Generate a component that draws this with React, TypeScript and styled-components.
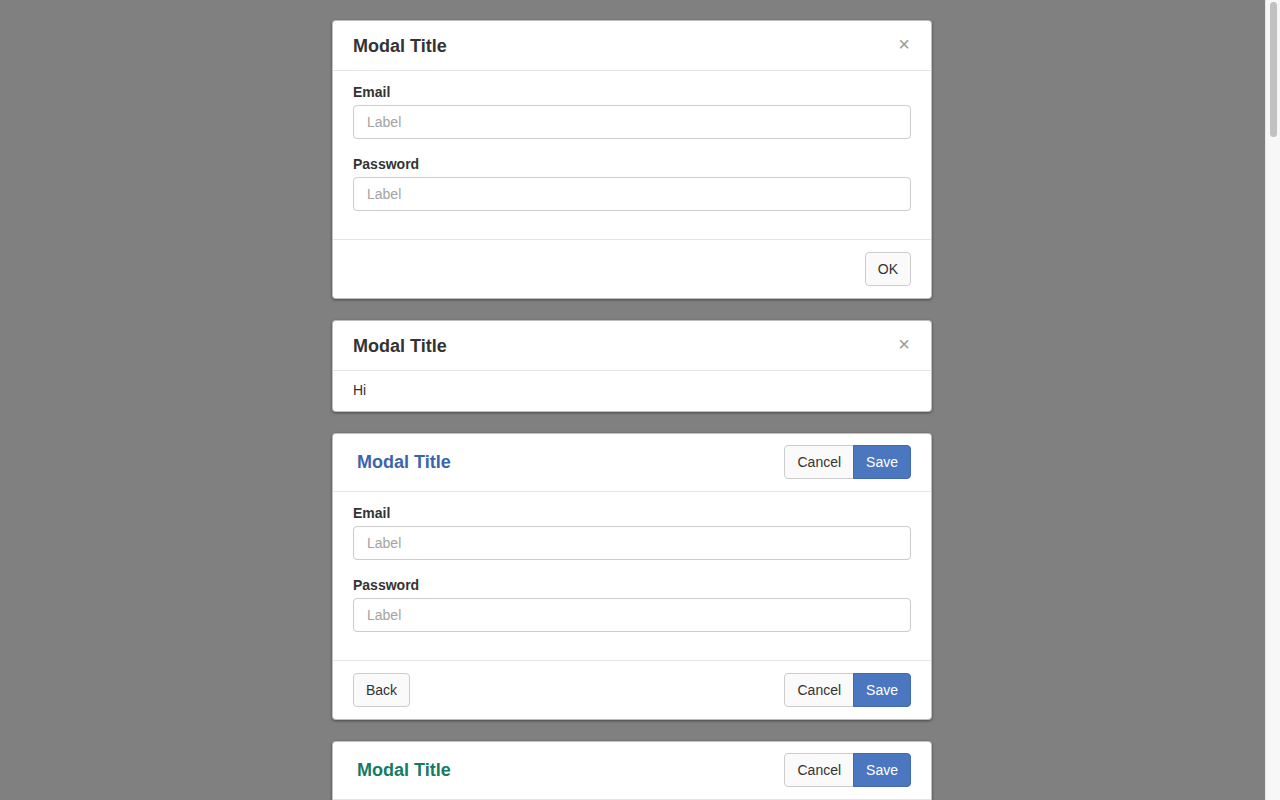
import React from "react";
import styled, { createGlobalStyle } from "styled-components";

const GlobalStyle = createGlobalStyle`
  html, body {
    margin: 0;
    padding: 0;
    height: 100%;
    overflow: hidden;
    background: #808080;
  }
  body {
    font-family: "Liberation Sans", Arial, Helvetica, sans-serif;
    font-size: 14px;
    line-height: 20px;
    color: #333;
  }
  * {
    box-sizing: border-box;
  }
`;

type Tone = "default" | "primary" | "success";

const titleColors: Record<Tone, string> = {
  default: "#333333",
  primary: "#3a65ad",
  success: "#157b64",
};

const Shell = styled.div`
  display: flex;
  height: 100vh;
`;

const Main = styled.div`
  flex: 1;
  overflow: hidden;
`;

// the window's scrollbar, drawn since the headless browser hides the real one
const ScrollRail = styled.div`
  width: 15px;
  flex-shrink: 0;
  padding: 2px 3px 0 4px;
  background: #f7f7f7;
  border-left: 1px solid #e6e6e6;
`;

const ScrollThumb = styled.div`
  height: 135px;
  border-radius: 4px;
  background: #c1c1c1;
`;

const Page = styled.div`
  display: flex;
  flex-direction: column;
  align-items: center;
  gap: 21px;
  padding: 20px 1px 40px 0;
`;

const ModalBox = styled.div`
  width: 600px;
  background: #fff;
  border: 1px solid rgba(0, 0, 0, 0.25);
  border-radius: 4px;
  box-shadow: 0 1px 3px rgba(0, 0, 0, 0.45);
`;

const Header = styled.div<{ $actions?: boolean }>`
  display: flex;
  align-items: center;
  justify-content: space-between;
  height: ${(p) => (p.$actions ? "auto" : "50px")};
  padding: ${(p) => (p.$actions ? "11px 20px 12px" : "0 20px")};
  border-bottom: 1px solid #e5e5e5;
`;

const Title = styled.h4<{ $tone: Tone; $indent?: boolean }>`
  margin: 0;
  padding-left: ${(p) => (p.$indent ? "4px" : "0")};
  font-size: 18px;
  font-weight: bold;
  line-height: 22px;
  color: ${(p) => titleColors[p.$tone]};
`;

const Close = styled.button`
  border: none;
  background: none;
  padding: 0;
  margin-top: -4px;
  margin-right: 1px;
  font-family: "Liberation Sans", Arial, sans-serif;
  font-size: 20px;
  font-weight: normal;
  line-height: 1;
  color: #9a9a9a;
  cursor: pointer;
`;

const Body = styled.div<{ $compact?: boolean }>`
  padding: ${(p) => (p.$compact ? "9px 20px 11px" : "11px 20px 13px")};
`;

const FormGroup = styled.div`
  display: flex;
  flex-direction: column;
  margin-bottom: 15px;
`;

const Label = styled.label`
  padding-top: 1px;
  font-weight: bold;
  line-height: 18px;
  margin-bottom: 4px;
`;

const Input = styled.input`
  height: 34px;
  width: 100%;
  padding: 6px 13px;
  font-family: inherit;
  font-size: 14px;
  color: #333;
  border: 1px solid #ccc;
  border-radius: 4px;
  outline: none;

  &::placeholder {
    color: #a3a3a3;
  }
`;

const Footer = styled.div`
  display: flex;
  align-items: center;
  justify-content: space-between;
  padding: 12px 20px;
  border-top: 1px solid #e5e5e5;
`;

const Spacer = styled.div``;

const Button = styled.button<{ $primary?: boolean }>`
  height: 34px;
  padding: 0 12px;
  font-family: inherit;
  font-size: 14px;
  line-height: 20px;
  color: ${(p) => (p.$primary ? "#fff" : "#333")};
  background: ${(p) => (p.$primary ? "#4a77bf" : "#fafafa")};
  border: 1px solid ${(p) => (p.$primary ? "#3e69ad" : "#cccccc")};
  border-radius: 4px;
  cursor: pointer;
`;

const ButtonGroup = styled.div`
  display: flex;

  ${Button} {
    border-radius: 0;
  }
  ${Button}:first-child {
    border-radius: 4px 0 0 4px;
  }
  ${Button}:last-child {
    border-radius: 0 4px 4px 0;
  }
  ${Button} + ${Button} {
    margin-left: -1px;
  }
`;

const LoginFields = () => (
  <>
    <FormGroup>
      <Label>Email</Label>
      <Input placeholder="Label" />
    </FormGroup>
    <FormGroup>
      <Label>Password</Label>
      <Input type="password" placeholder="Label" />
    </FormGroup>
  </>
);

const CancelSave = () => (
  <ButtonGroup>
    <Button>Cancel</Button>
    <Button $primary>Save</Button>
  </ButtonGroup>
);

const SimpleModal = ({ children, compact }: { children: React.ReactNode; compact?: boolean }) => (
  <ModalBox>
    <Header>
      <Title $tone="default">Modal Title</Title>
      <Close aria-label="Close">×</Close>
    </Header>
    <Body $compact={compact}>{children}</Body>
  </ModalBox>
);

const ActionModal = ({ tone }: { tone: Tone }) => (
  <ModalBox>
    <Header $actions>
      <Title $tone={tone} $indent>
        Modal Title
      </Title>
      <CancelSave />
    </Header>
    <Body>
      <LoginFields />
    </Body>
    <Footer>
      <Button>Back</Button>
      <CancelSave />
    </Footer>
  </ModalBox>
);

const App = () => (
  <>
    <GlobalStyle />
    <Shell>
      <Main>
        <Page>
          <ModalBox>
            <Header>
              <Title $tone="default">Modal Title</Title>
              <Close aria-label="Close">×</Close>
            </Header>
            <Body>
              <LoginFields />
            </Body>
            <Footer>
              <Spacer />
              <Button>OK</Button>
            </Footer>
          </ModalBox>

          <SimpleModal compact>Hi</SimpleModal>

          <ActionModal tone="primary" />
          <ActionModal tone="success" />
        </Page>
      </Main>
      <ScrollRail>
        <ScrollThumb />
      </ScrollRail>
    </Shell>
  </>
);

export default App;
